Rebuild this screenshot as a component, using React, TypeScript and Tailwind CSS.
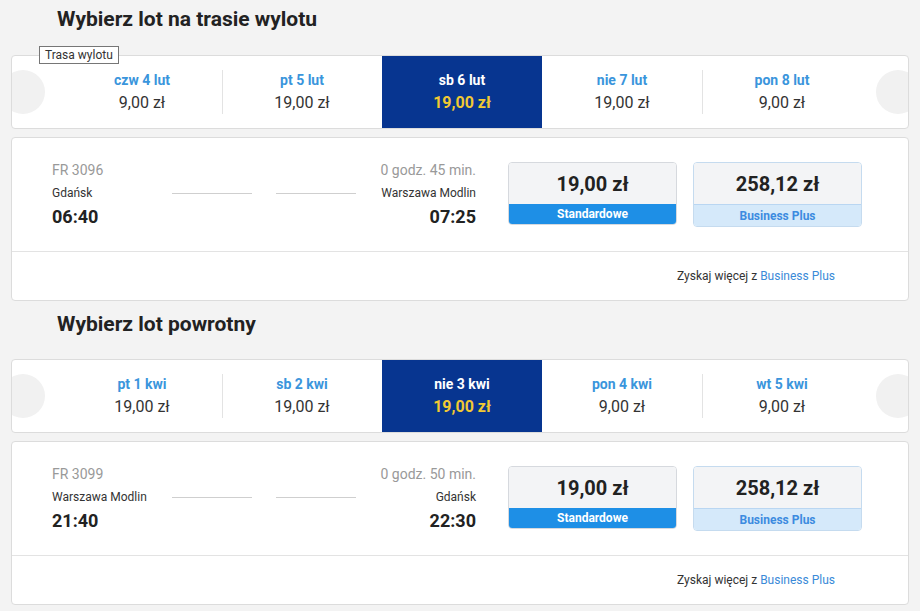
import React from 'react';

type DateCell = { label: string; price: string; selected?: boolean };

type Flight = {
  number: string;
  duration: string;
  from: string;
  to: string;
  dep: string;
  arr: string;
};

const outboundDates: DateCell[] = [
  { label: 'czw 4 lut', price: '9,00 zł' },
  { label: 'pt 5 lut', price: '19,00 zł' },
  { label: 'sb 6 lut', price: '19,00 zł', selected: true },
  { label: 'nie 7 lut', price: '19,00 zł' },
  { label: 'pon 8 lut', price: '9,00 zł' },
];

const returnDates: DateCell[] = [
  { label: 'pt 1 kwi', price: '19,00 zł' },
  { label: 'sb 2 kwi', price: '19,00 zł' },
  { label: 'nie 3 kwi', price: '19,00 zł', selected: true },
  { label: 'pon 4 kwi', price: '9,00 zł' },
  { label: 'wt 5 kwi', price: '9,00 zł' },
];

const outboundFlight: Flight = {
  number: 'FR 3096',
  duration: '0 godz. 45 min.',
  from: 'Gdańsk',
  to: 'Warszawa Modlin',
  dep: '06:40',
  arr: '07:25',
};

const returnFlight: Flight = {
  number: 'FR 3099',
  duration: '0 godz. 50 min.',
  from: 'Warszawa Modlin',
  to: 'Gdańsk',
  dep: '21:40',
  arr: '22:30',
};

const DateBar: React.FC<{ dates: DateCell[] }> = ({ dates }) => {
  const selIdx = dates.findIndex((d) => d.selected);
  return (
    <div className="relative mx-[11px] h-[74px] bg-white border border-[#dcdcdc] rounded-[4px] overflow-hidden">
      {/* nav arrows (greyed out circles) */}
      <div className="absolute left-[-11px] top-[14px] w-[44px] h-[44px] rounded-full bg-[#f1f1f1]" />
      <div className="absolute right-[-12px] top-[14px] w-[44px] h-[44px] rounded-full bg-[#f1f1f1]" />
      <div className="flex h-full pl-[50px]">
        {dates.map((d, i) => {
          const showSep = i > 0 && !d.selected && i - 1 !== selIdx;
          return (
            <div
              key={d.label}
              className={
                d.selected
                  ? 'w-[160px] h-full bg-[#073590] flex flex-col items-center justify-center'
                  : 'relative w-[160px] h-full flex flex-col items-center justify-center'
              }
            >
              {showSep && <div className="absolute left-0 top-[14px] bottom-[14px] w-px bg-[#e3e3e3]" />}
              <div className={d.selected ? 'text-[14px] font-bold text-white leading-[18px]' : 'text-[14px] font-bold text-[#3a95dc] leading-[18px]'}>
                {d.label}
              </div>
              <div className={d.selected ? 'mt-[4px] text-[16px] font-bold text-[#f1c933] leading-[20px]' : 'mt-[4px] text-[16px] text-[#333] leading-[20px]'}>
                {d.price}
              </div>
            </div>
          );
        })}
      </div>
    </div>
  );
};

const FlightCard: React.FC<{ f: Flight }> = ({ f }) => (
  <div className="mx-[11px] bg-white border border-[#dcdcdc] rounded-[4px]">
    <div className="flex items-start h-[114px] border-b border-[#e3e3e3] pl-[40px] pt-[24px]">
      <div className="w-[424px]">
        <div className="flex justify-between text-[14px] text-[#999] leading-[16px]">
          <span>{f.number}</span>
          <span>{f.duration}</span>
        </div>
        <div className="flex items-center justify-between mt-[8px] text-[12px] text-[#333] leading-[14px]">
          <span className="w-[100px]">{f.from}</span>
          <div className="flex items-center gap-[24px]">
            <div className="w-[80px] h-px bg-[#cfcfcf]" />
            <div className="w-[80px] h-px bg-[#cfcfcf]" />
          </div>
          <span className="w-[100px] text-right">{f.to}</span>
        </div>
        <div className="flex justify-between mt-[6px] text-[18px] font-bold text-[#222] leading-[22px]">
          <span>{f.dep}</span>
          <span>{f.arr}</span>
        </div>
      </div>
      <div className="flex gap-[16px] ml-[32px]">
        <div className="w-[169px] h-[63px] rounded-[4px] border border-[#d6d9de] overflow-hidden flex flex-col">
          <div className="flex-1 bg-[#f3f4f6] flex items-center justify-center text-[20px] font-bold text-[#222]">
            19,00 zł
          </div>
          <div className="h-[20px] bg-[#1e8fe6] flex items-center justify-center text-[12px] font-bold text-white">
            Standardowe
          </div>
        </div>
        <div className="w-[169px] h-[65px] rounded-[4px] border border-[#c5dbef] overflow-hidden flex flex-col">
          <div className="flex-1 bg-[#f3f4f6] flex items-center justify-center text-[20px] font-bold text-[#222]">
            258,12 zł
          </div>
          <div className="h-[22px] bg-[#d5e9fa] border-t border-[#b9d6f2] flex items-center justify-center text-[12px] font-bold text-[#3c8be0]">
            Business Plus
          </div>
        </div>
      </div>
    </div>
    <div className="h-[48px] flex items-center justify-end pr-[73px] text-[12px] text-[#333]">
      Zyskaj więcej z&nbsp;<span className="text-[#3a8ad8]">Business Plus</span>
    </div>
  </div>
);

export default function App() {
  return (
    <div className="w-[920px] h-[611px] bg-[#f3f3f3] overflow-hidden" style={{ fontFamily: 'Roboto, "Noto Sans", sans-serif' }}>
      <h1 className="pl-[57px] pt-[5px] h-[55px] text-[21px] font-bold text-[#222] leading-[28px]">
        Wybierz lot na trasie wylotu
      </h1>
      <div className="relative">
        <DateBar dates={outboundDates} />
        <div className="absolute left-[39px] top-[-9px] px-[5px] h-[18px] flex items-center bg-white border border-[#767676] text-[12px] text-[#333] leading-none">
          Trasa wylotu
        </div>
      </div>
      <div className="h-[8px]" />
      <FlightCard f={outboundFlight} />
      <h2 className="pl-[57px] pt-[9px] h-[58px] text-[21px] font-bold text-[#222] leading-[28px]">
        Wybierz lot powrotny
      </h2>
      <DateBar dates={returnDates} />
      <div className="h-[8px]" />
      <FlightCard f={returnFlight} />
    </div>
  );
}
